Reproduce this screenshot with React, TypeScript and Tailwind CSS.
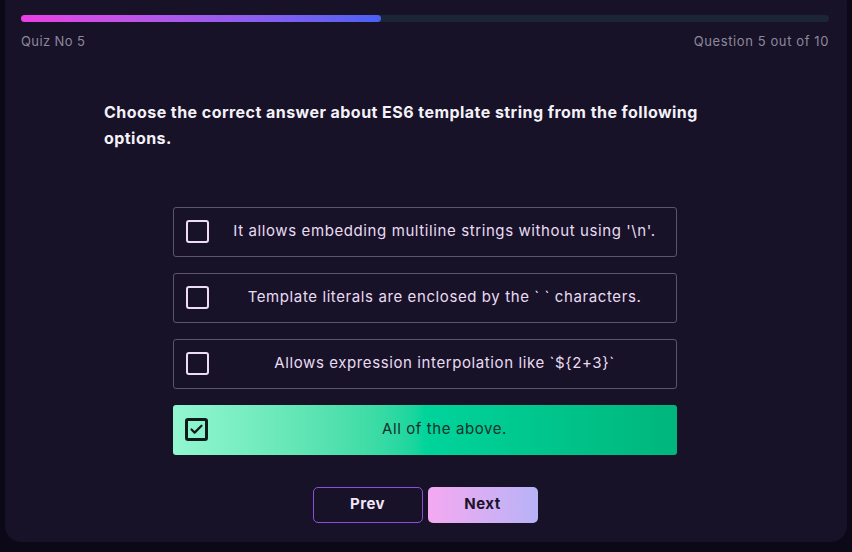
import { Check } from 'lucide-react';

interface Option {
  id: number;
  text: string;
  selected?: boolean;
}

const options: Option[] = [
  { id: 1, text: "It allows embedding multiline strings without using '\\n'." },
  { id: 2, text: 'Template literals are enclosed by the ` ` characters.' },
  { id: 3, text: 'Allows expression interpolation like `${2+3}`' },
  { id: 4, text: 'All of the above.', selected: true },
];

export default function App() {
  return (
    <div
      className="w-[852px] h-[552px] overflow-hidden bg-[#0b0917] px-[5px]"
      style={{ fontFamily: 'Inter, "Noto Sans", sans-serif' }}
    >
      <div className="-mt-[12px] h-[554px] rounded-[16px] bg-[#181229] px-4 pt-[27px]">
        {/* progress */}
        <div className="h-[7px] w-[808px] rounded-full bg-[#1b2535]">
          <div className="h-full w-[44.5%] rounded-full bg-gradient-to-r from-[#ea3ee4] to-[#4a60f4]" />
        </div>
        <div className="mt-[10px] flex w-[808px] justify-between text-[13px] tracking-[0.4px] text-[#8d8899]">
          <span>Quiz No 5</span>
          <span className="tracking-[0.6px]">Question 5 out of 10</span>
        </div>

        <h2 className="ml-[83px] mt-[47px] w-[640px] text-[16px] font-bold leading-[26px] tracking-[0.45px] text-[#f4f1f8]">
          Choose the correct answer about ES6 template string from the following options.
        </h2>

        <div className="ml-[152px] mt-[56px] flex w-[504px] flex-col gap-4">
          {options.map((opt) => (
            <div
              key={opt.id}
              className={`flex h-[50px] items-center rounded-[3px] pl-3 ${
                opt.selected
                  ? 'bg-gradient-to-r from-[#92f7d1] via-[#00d49b] to-[#00b67c]'
                  : 'border border-[#5c5469]'
              }`}
            >
              <div
                className={`flex h-[23px] w-[23px] shrink-0 items-center justify-center rounded-[3px] ${
                  opt.selected ? 'border-[3px] border-[#0f1a1a]' : 'border-[2.5px] border-[#eddcf3]'
                }`}
              >
                {opt.selected && <Check className="h-[15px] w-[15px] text-[#0f1a1a]" strokeWidth={3.5} />}
              </div>
              <span
                className={`ml-1 flex-1 text-center text-[15px] tracking-[0.6px] ${
                  opt.selected ? 'text-[#17302a]' : 'text-[#e9dcf1]'
                }`}
              >
                {opt.text}
              </span>
            </div>
          ))}
        </div>

        <div className="mt-[32px] flex justify-center gap-[5px] pr-[2px]">
          <button className="h-[36px] w-[110px] rounded-[5px] border border-[#8a4fdb] text-[15px] font-bold tracking-[0.5px] text-[#f1e6f8]">
            Prev
          </button>
          <button className="h-[36px] w-[110px] rounded-[5px] bg-gradient-to-r from-[#f4a9f1] to-[#b7b2f7] text-[15px] font-bold tracking-[0.5px] text-[#1a1428]">
            Next
          </button>
        </div>
      </div>
    </div>
  );
}
